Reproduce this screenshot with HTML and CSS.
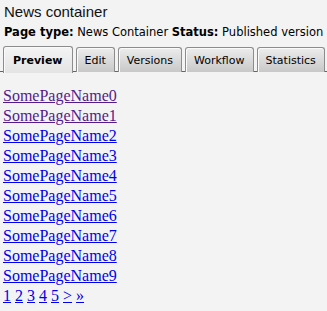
FILE: index.html
```html
<!DOCTYPE html>
<html lang="en">
<head>
    <meta charset="UTF-8">
    <title>News container</title>
    <link rel="stylesheet" href="styles.css">
</head>
<body>
    <div class="header">
        <h1 class="title">News container</h1>
        <div class="info">
            <b>Page type:</b> News Container <b>Status:</b> Published version
        </div>
    </div>

    <div class="tabs">
        <span class="tab active">Preview</span>
        <span class="tab">Edit</span>
        <span class="tab">Versions</span>
        <span class="tab">Workflow</span>
        <span class="tab">Statistics</span>
    </div>

    <div class="pages">
        <div><a class="visited" href="#">SomePageName0</a></div>
        <div><a class="visited" href="#">SomePageName1</a></div>
        <div><a href="#">SomePageName2</a></div>
        <div><a href="#">SomePageName3</a></div>
        <div><a href="#">SomePageName4</a></div>
        <div><a href="#">SomePageName5</a></div>
        <div><a href="#">SomePageName6</a></div>
        <div><a href="#">SomePageName7</a></div>
        <div><a href="#">SomePageName8</a></div>
        <div><a href="#">SomePageName9</a></div>
        <div class="pager">
            <a href="#">1</a> <a href="#">2</a> <a href="#">3</a> <a href="#">4</a> <a href="#">5</a> <a href="#">&gt;</a> <a href="#">&raquo;</a>
        </div>
    </div>
</body>
</html>
```

FILE: styles.css
```css
body {
    margin: 0;
    padding: 0 3px;
    background: #f3f3f3;
    font-family: "DejaVu Sans", Verdana, sans-serif;
    color: #000;
}

.header {
    padding-left: 1px;
}

.title {
    margin: 0;
    padding-top: 2px;
    font-family: "Liberation Sans", Arial, sans-serif;
    font-size: 15px;
    font-weight: normal;
    line-height: 19px;
    color: #111;
}

.info {
    margin-top: 4px;
    font-size: 11.5px;
    line-height: 14px;
}

.tabs {
    display: flex;
    gap: 3px;
    margin-top: 7px;
    margin-left: -3px;
    margin-right: -3px;
    padding-left: 3px;
    border-bottom: 1px solid #666;
    height: 25px;
}

.tab {
    display: flex;
    align-items: center;
    padding: 0 8px;
    height: 24px;
    margin-top: 1px;
    font-size: 11px;
    border: 1px solid #8c8c8c;
    border-bottom: none;
    border-radius: 3px 3px 0 0;
    background: linear-gradient(#ececec, #c8c8c8);
    box-shadow: inset 1px 1px 0 #fafafa;
}

.tab.active {
    font-weight: bold;
    height: 26px;
    margin-top: 0;
    padding: 0 9px;
    background: linear-gradient(#f4f4f4, #e4e4e4);
}

.pages {
    margin-top: 14px;
    font-family: "Liberation Serif", "Times New Roman", serif;
    font-size: 16px;
    line-height: 20px;
}

.pages a {
    color: #0000ee;
}

.pages a.visited {
    color: #551a8b;
}
```
